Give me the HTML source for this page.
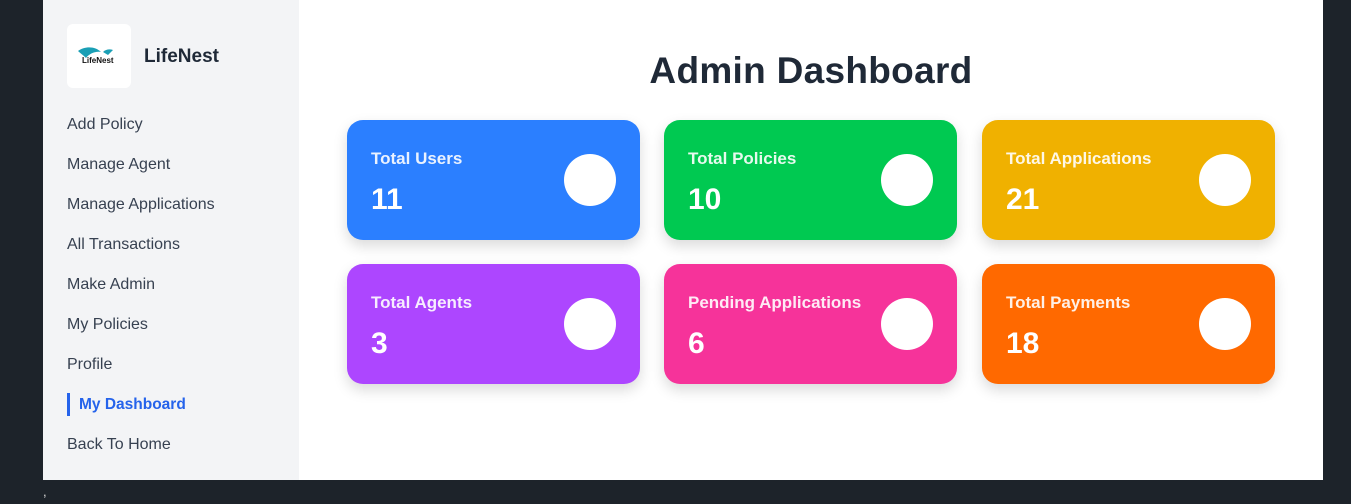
<!DOCTYPE html>
<html><head><style>
*{margin:0;padding:0;box-sizing:border-box}
body{width:1351px;height:504px;background:#1d232a;font-family:"Liberation Sans",sans-serif;position:relative;overflow:hidden}
.wrap{position:absolute;left:43px;top:0;width:1280px;height:480px;background:#fff}
.side{position:absolute;left:0;top:0;width:256px;height:480px;background:#f3f4f6}
.logo{position:absolute;left:24px;top:24px;width:64px;height:64px;background:#fff;border-radius:6px}
.brand{position:absolute;left:101px;top:46px;font-size:19px;font-weight:bold;color:#1f2937}
.nav{position:absolute;left:24px;font-size:16px;color:#374151}
.nav.active{color:#2563eb;font-weight:bold;padding-left:9px;border-left:3px solid #2563eb;left:24px;font-size:15.5px}
h1{position:absolute;left:256px;width:1024px;text-align:center;top:50px;font-size:37px;font-weight:bold;color:#1f2937;letter-spacing:0.3px}
.card{position:absolute;width:293px;height:120px;border-radius:16px;box-shadow:0 6px 14px rgba(0,0,0,.15);color:#fff}
.card .t{position:absolute;left:24px;top:29px;font-size:17px;font-weight:bold;color:rgba(255,255,255,.9)}
.card .n{position:absolute;left:24px;top:63px;font-size:30px;font-weight:bold}
.card .c{position:absolute;right:24px;top:34px;width:52px;height:52px;border-radius:50%;background:#fff}
</style></head><body>
<div class="wrap">
<div class="side">
<div class="logo"><svg width="64" height="64"><path d="M11 27 C18 22 28 22 34 28 C28 27 22 30 19 34 C16 31 13 29 11 27Z" fill="#1a9fb5"/><path d="M36 28 C39 25 43 25 46 26 L41 31Z" fill="#1a9fb5"/><text x="15" y="39" font-size="8" font-weight="bold" fill="#111" font-family="Liberation Sans">LifeNest</text></svg></div>
<div class="brand">LifeNest</div>
<div class="nav" style="top:116px">Add Policy</div>
<div class="nav" style="top:156px">Manage Agent</div>
<div class="nav" style="top:196px">Manage Applications</div>
<div class="nav" style="top:236px">All Transactions</div>
<div class="nav" style="top:276px">Make Admin</div>
<div class="nav" style="top:316px">My Policies</div>
<div class="nav" style="top:356px">Profile</div>
<div class="nav active" style="top:393px;line-height:23px">My Dashboard</div>
<div class="nav" style="top:436px">Back To Home</div>
</div>
<h1>Admin Dashboard</h1>
<div class="card" style="left:304px;top:120px;background:#2b7fff"><div class="t">Total Users</div><div class="n">11</div><div class="c"></div></div>
<div class="card" style="left:621px;top:120px;background:#00c951"><div class="t">Total Policies</div><div class="n">10</div><div class="c"></div></div>
<div class="card" style="left:939px;top:120px;background:#f0b100"><div class="t">Total Applications</div><div class="n">21</div><div class="c"></div></div>
<div class="card" style="left:304px;top:264px;background:#ad46ff"><div class="t">Total Agents</div><div class="n">3</div><div class="c"></div></div>
<div class="card" style="left:621px;top:264px;background:#f6339a"><div class="t">Pending Applications</div><div class="n">6</div><div class="c"></div></div>
<div class="card" style="left:939px;top:264px;background:#ff6900"><div class="t">Total Payments</div><div class="n">18</div><div class="c"></div></div>
</div>
<div style="position:absolute;left:43px;top:484px;color:#ddd;font-size:13px">,</div>
</body></html>
